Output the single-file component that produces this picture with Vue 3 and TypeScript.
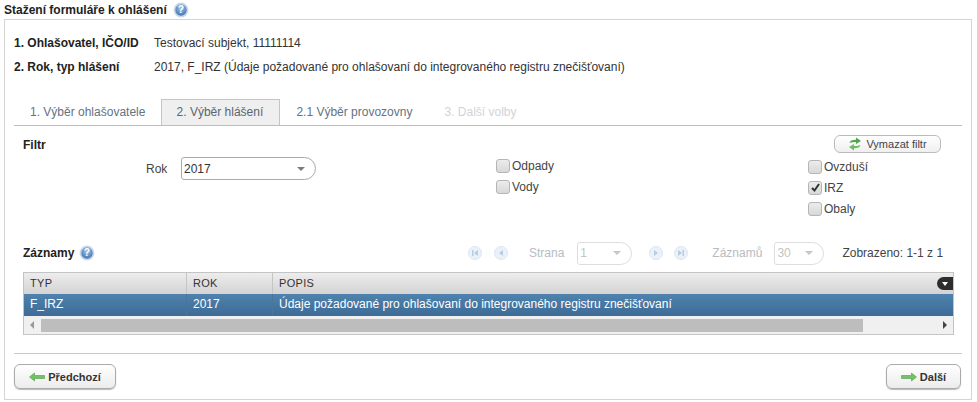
<script setup lang="ts">
const tabs = [
  { label: '1. Výběr ohlašovatele', cls: 'tab' },
  { label: '2. Výběr hlášení', cls: 'tab active' },
  { label: '2.1 Výběr provozovny', cls: 'tab' },
  { label: '3. Další volby', cls: 'tab off' },
]
const col1 = [{ label: 'Odpady', on: false }, { label: 'Vody', on: false }]
const col2 = [{ label: 'Ovzduší', on: false }, { label: 'IRZ', on: true }, { label: 'Obaly', on: false }]
</script>

<template>
  <div class="page">
    <div class="title">
      <span>Stažení formuláře k ohlášení</span>
      <svg class="help" viewBox="0 0 14 14"><defs><radialGradient id="hg" cx="50%" cy="35%" r="65%"><stop offset="0" stop-color="#a9c5e6" /><stop offset="1" stop-color="#3f74b5" /></radialGradient></defs><circle cx="7" cy="7" r="6.5" fill="#c9d8ea" /><circle cx="7" cy="7" r="5" fill="url(#hg)" /><text x="7" y="10" text-anchor="middle" class="q">?</text></svg>
    </div>
    <div class="panel">
      <div class="info">
        <b>1. Ohlašovatel, IČO/ID</b><span>Testovací subjekt, 11111114</span>
        <b>2. Rok, typ hlášení</b><span>2017, F_IRZ (Údaje požadované pro ohlašovaní do integrovaného registru znečišťovaní)</span>
      </div>
      <div class="tabs">
        <div v-for="t in tabs" :key="t.label" :class="t.cls">{{ t.label }}</div>
      </div>
      <div class="filter">
        <div class="filter-col first">
          <b class="filter-title">Filtr</b>
          <div class="year">
            <span class="year-label">Rok</span>
            <div class="select big"><span>2017</span><i class="caret"></i></div>
          </div>
        </div>
        <div class="filter-col middle">
          <label v-for="c in col1" :key="c.label" class="check"><span class="box"></span>{{ c.label }}</label>
        </div>
        <div class="filter-col last">
          <div class="clear-row">
            <div class="clear">
              <svg width="14" height="16" viewBox="0 0 14 16"><path d="M1.500 7C2 4.500 4 3.800 8 3.800V1.500L13 5L8 8V6C5.500 6 3.500 6 1.500 7Z" fill="#4fa64c" /><path d="M12.500 9C12 11.500 10 12.200 6 12.200V14.500L1 11L6 8V10C8.500 10 10.500 10 12.500 9Z" fill="#6fbb68" /></svg>
              <span>Vymazat filtr</span>
            </div>
          </div>
          <label v-for="c in col2" :key="c.label" class="check">
            <span class="box"><svg v-if="c.on" width="11" height="11" viewBox="0 0 11 11"><path d="M2 6L4.500 8.500L9 2" fill="none" stroke="#333" stroke-width="2" /></svg></span>{{ c.label }}
          </label>
        </div>
      </div>
      <div class="records-head">
        <div class="records-title">
          <b>Záznamy</b>
          <svg class="help" viewBox="0 0 14 14"><circle cx="7" cy="7" r="6.500" fill="#c9d8ea" /><circle cx="7" cy="7" r="5" fill="url(#hg)" /><text x="7" y="10" text-anchor="middle" class="q">?</text></svg>
        </div>
        <div class="pager">
          <span class="nav n1"><svg width="8" height="8" viewBox="0 0 8 8"><path d="M1 1H2.500V7H1ZM7 1V7L3 4Z" fill="#b6cde4" /></svg></span>
          <span class="nav"><svg width="8" height="8" viewBox="0 0 8 8"><path d="M6 1V7L2 4Z" fill="#b6cde4" /></svg></span>
          <span class="muted strana">Strana</span>
          <div class="select small one"><span>1</span><i class="caret"></i></div>
          <span class="nav after"><svg width="8" height="8" viewBox="0 0 8 8"><path d="M2 1V7L6 4Z" fill="#b6cde4" /></svg></span>
          <span class="nav"><svg width="8" height="8" viewBox="0 0 8 8"><path d="M7 1H5.500V7H7ZM1 1V7L5 4Z" fill="#b6cde4" /></svg></span>
          <span class="muted zaznamu">Záznamů</span>
          <div class="select small thirty"><span>30</span><i class="caret"></i></div>
          <span class="shown">Zobrazeno: 1-1 z 1</span>
        </div>
      </div>
      <div class="grid">
        <div class="row head">
          <div class="c1">TYP</div><div class="c2">ROK</div><div class="c3">POPIS</div>
          <span class="menu"><i></i></span>
        </div>
        <div class="row sel">
          <div class="c1">F_IRZ</div><div class="c2">2017</div><div class="c3">Údaje požadované pro ohlašovaní do integrovaného registru znečišťovaní</div>
        </div>
        <div class="scroll">
          <i class="arrow-l"></i>
          <div class="track"><div class="thumb"></div></div>
          <i class="arrow-r"></i>
        </div>
      </div>
      <div class="footer">
        <div class="btn">
          <svg width="16" height="10" viewBox="0 0 16 10"><path d="M0.500 5L5.500 1V3.500H15.500V6.500H5.500V9Z" fill="#74c267" stroke="#4f9d48" stroke-width=".6" /></svg>
          <span>Předchozí</span>
        </div>
        <div class="btn next">
          <svg width="16" height="10" viewBox="0 0 16 10"><path d="M15.500 5L10.500 1V3.500H0.500V6.500H10.500V9Z" fill="#74c267" stroke="#4f9d48" stroke-width=".6" /></svg>
          <span>Další</span>
        </div>
      </div>
    </div>
  </div>
</template>

<style>
html, body { margin: 0; background: #fff; }
</style>

<style scoped>
.page { width: 977px; height: 402px; box-sizing: border-box; padding: 0 5px 0 4px; font: 12px "Liberation Sans", Arial, sans-serif; color: #333; overflow: hidden; }
.title { height: 19px; display: flex; align-items: center; gap: 6px; font-weight: 700; color: #222; }
.help { width: 16px; height: 16px; flex: none; }
.q { font: 700 9px "Liberation Sans", Arial, sans-serif; fill: #fff; }
.panel { height: 381px; box-sizing: border-box; border: 1px solid #d4d4d4; padding: 0 9px; }
.info { display: grid; grid-template-columns: 140px 1fr; grid-auto-rows: 24px; padding-top: 11px; align-items: center; }
.info b { color: #222; }
.tabs { display: flex; height: 26px; margin-top: 20px; border-bottom: 1px solid #bdbdbd; align-items: stretch; }
.tab { padding: 0 16px; line-height: 26px; color: #66727f; }
.tab.active { background: #efefef; border: 1px solid #c4c4c4; border-bottom: 0; color: #5c6570; box-sizing: border-box; width: 119px; line-height: 25px; text-align: center; padding: 0 2px 0 0; }
.tab.off { color: #cfd4da; margin-left: 0; }
.filter { display: flex; height: 111px; }
.filter b { color: #222; }
.filter-col { display: flex; flex-direction: column; }
.first { width: 482px; }
.filter-title { margin: 12px 0 0 9px; line-height: 14px; }
.year { display: flex; align-items: center; margin: 5px 0 0 132px; height: 23px; }
.year-label { width: 35px; color: #444; }
.middle { width: 312px; padding-top: 29px; }
.last { flex: 1; }
.clear-row { height: 30px; flex: none; display: flex; padding-top: 9px; box-sizing: border-box; padding-left: 26px; }
.clear { width: 107px; height: 18px; box-sizing: border-box; border: 1px solid #bcbcbc; border-radius: 6px; background: linear-gradient(#fff, #efefef); display: flex; align-items: center; justify-content: center; gap: 4px; font-size: 11px; color: #444; }
.check { height: 21px; flex: none; display: flex; align-items: center; color: #444; gap: 2px; }
.box { width: 12px; height: 12px; border: 1px solid #b5b5b5; border-radius: 3px; background: linear-gradient(#ececec, #d8d8d8); display: flex; align-items: center; justify-content: center; }
.select { display: flex; align-items: center; justify-content: space-between; box-sizing: border-box; border: 1px solid #aaa; border-radius: 3px 12px 12px 3px; background: #fff; padding: 0 10px 0 2px; }
.big { width: 135px; height: 23px; color: #333; }
.caret { width: 0; height: 0; border-left: 4px solid transparent; border-right: 4px solid transparent; border-top: 4px solid #7b7b7b; }
.records-head { display: flex; align-items: center; height: 24px; margin-top: 4px; padding-left: 9px; }
.records-title { width: 445px; display: flex; align-items: center; gap: 5px; font-size: 12px; }
.records-title b { color: #222; }
.pager { display: flex; align-items: center; flex: 1; }
.nav { width: 14px; height: 14px; border-radius: 50%; background: #eaf1f8; border: 1px solid #dde6f0; box-sizing: border-box; display: flex; align-items: center; justify-content: center; margin-right: 11px; }
.nav svg { display: block; }
.n1 { margin-right: 12px; }
.muted { color: #b7bcc2; }
.strana { margin: 0 13px 0 10px; }
.small { height: 23px; border-color: #ddd; color: #c4c4c4; }
.one { width: 55px; }
.thirty { width: 50px; }
.small .caret { border-top-color: #c6c6c6; }
.after { margin-left: 17px; }
.zaznamu { margin: 0 12px 0 13px; }
.shown { margin-left: 18px; color: #444; }
.grid { margin: 7px 8px 0 9px; border: 1px solid #c4c4c4; height: 63px; box-sizing: border-box; }
.row { display: flex; position: relative; }
.c1 { width: 163px; padding-left: 6px; box-sizing: border-box; }
.c2 { width: 86px; padding-left: 6px; box-sizing: border-box; }
.c3 { flex: 1; padding-left: 6px; }
.head { height: 21px; line-height: 20px; background: linear-gradient(#ededed, #d3d3d3); font-size: 11px; color: #333; letter-spacing: .3px; }
.head .c1, .head .c2 { border-right: 1px solid #c4c4c4; }
.sel { height: 22px; line-height: 21px; background: linear-gradient(#4f82ae, #3d6b96); color: #fff; }
.sel .c1, .sel .c2 { border-right: 1px solid #4a749b; }
.menu { position: absolute; right: 0; top: 4px; width: 16px; height: 13px; background: #2d2d2d; border-radius: 7px 0 0 7px; display: flex; align-items: center; justify-content: center; }
.menu i { width: 0; height: 0; border-left: 3px solid transparent; border-right: 3px solid transparent; border-top: 4px solid #fff; }
.scroll { height: 18px; background: #f0f0f0; display: flex; align-items: center; }
.track { flex: 1; height: 13px; margin: 0 2px 0 1px; }
.thumb { width: 822px; height: 13px; background: #bdbdbd; }
.arrow-l, .arrow-r { width: 0; height: 0; border-top: 4px solid transparent; border-bottom: 4px solid transparent; flex: none; }
.arrow-l { border-right: 4px solid #999; margin-left: 6px; margin-right: 6px; }
.arrow-r { border-left: 4px solid #444; margin-left: 6px; margin-right: 6px; }
.footer { margin-top: 18px; border-top: 1px solid #c9c9c9; padding: 10px 1px 0 0; display: flex; justify-content: space-between; width: 948px; box-sizing: border-box; }
.btn { height: 25px; box-sizing: border-box; border: 1px solid #aaa; border-radius: 6px; background: linear-gradient(#fff, #ececec); box-shadow: 0 1px 1px #bbb; display: flex; align-items: center; justify-content: center; gap: 3px; font-weight: 700; font-size: 11px; color: #333; width: 102px; }
.next { width: 75px; }
</style>
